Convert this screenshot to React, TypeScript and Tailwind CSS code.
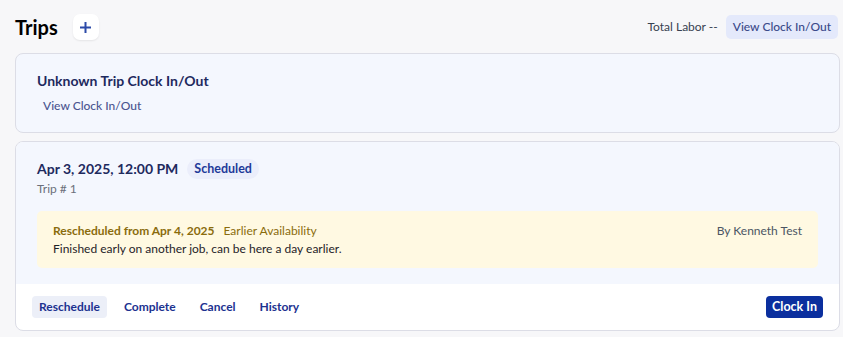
import React from "react";

export default function App() {
  return (
    <div
      className="min-h-[337px] w-[843px] bg-[#f7f7f9] text-[#1f2937]"
      style={{ fontFamily: 'Lato, "Noto Sans", sans-serif' }}
    >
      <div className="flex items-center justify-between pl-[15px] pr-[5px] pt-[10px] h-[44px]">
        <div className="flex items-center gap-[15px]">
          <h1 className="text-[20px] font-bold text-black leading-none">Trips</h1>
          <button className="flex h-[26px] w-[26px] items-center justify-center rounded-[7px] bg-white shadow-[0_1px_2px_rgba(0,0,0,0.08)]">
            <svg width="13" height="13" viewBox="0 0 13 13">
              <path d="M6.5 1v11M1 6.5h11" stroke="#2c4aa8" strokeWidth="2" strokeLinecap="butt" />
            </svg>
          </button>
        </div>
        <div className="flex items-center gap-[8px]">
          <span className="text-[12px] text-[#374151]">Total Labor --</span>
          <button className="rounded-[5px] bg-[#e4e9fb] px-[7px] py-[3px] text-[12px] font-medium text-[#3b4a8a]">
            View Clock In/Out
          </button>
        </div>
      </div>

      <div className="flex flex-col gap-[8px] px-[15px] pt-[9px] pr-[3px]">
        <div className="rounded-[8px] border border-[#dcdde6] bg-[#f4f7fe] px-[21px] pt-[17px] pb-[17px]">
          <div className="text-[14px] font-bold text-[#1e2a5e] leading-[20px]">
            Unknown Trip Clock In/Out
          </div>
          <div className="mt-[6px] pl-[6px] text-[12px] font-medium text-[#4b5590] leading-[18px]">
            View Clock In/Out
          </div>
        </div>

        <div className="overflow-hidden rounded-[8px] border border-[#dcdde6] bg-white">
          <div className="bg-[#f4f7fe] px-[21px] pt-[17px] pb-[16px]">
            <div className="flex items-center gap-[9px]">
              <span className="text-[14px] font-bold text-[#1e2a5e] leading-[20px]">
                Apr 3, 2025, 12:00 PM
              </span>
              <span className="rounded-full bg-[#ebeefb] px-[7px] py-[1px] text-[12.5px] font-bold text-[#1f3a99] leading-[18px]">
                Scheduled
              </span>
            </div>
            <div className="mt-[1px] text-[12px] text-[#6b6f7b] leading-[18px]">Trip # 1</div>
            <div className="mt-[13px] rounded-[5px] bg-[#fff9e2] px-[16px] pt-[11px] pb-[10px]">
              <div className="flex items-center justify-between text-[12px] leading-[18px]">
                <div className="flex items-center gap-[9px]">
                  <span className="font-bold text-[#8a6c0d]">Rescheduled from Apr 4, 2025</span>
                  <span className="text-[#8a6c0d]">Earlier Availability</span>
                </div>
                <span className="text-[#4b5563]">By Kenneth Test</span>
              </div>
              <div className="text-[12px] leading-[18px] text-[#1f2329]">
                Finished early on another job, can be here a day earlier.
              </div>
            </div>
          </div>
          <div className="flex items-center justify-between px-[16px] py-[12px]">
            <div className="flex items-center gap-[10px]">
              <button className="rounded-[4px] bg-[#eceff8] px-[7px] py-[2px] text-[12px] font-bold text-[#1c3290] leading-[18px]">
                Reschedule
              </button>
              <button className="px-[7px] py-[2px] text-[12px] font-bold text-[#1c3290] leading-[18px]">
                Complete
              </button>
              <button className="px-[7px] py-[2px] text-[12px] font-bold text-[#1c3290] leading-[18px]">
                Cancel
              </button>
              <button className="px-[7px] py-[2px] text-[12px] font-bold text-[#1c3290] leading-[18px]">
                History
              </button>
            </div>
            <button className="rounded-[4px] bg-[#0b2f9e] px-[6px] py-[2px] text-[12.5px] font-bold text-white leading-[18px]">
              Clock In
            </button>
          </div>
        </div>
      </div>
    </div>
  );
}
